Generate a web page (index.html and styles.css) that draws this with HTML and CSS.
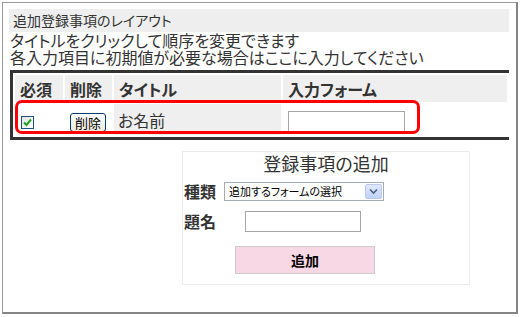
FILE: index.html
```html
<!DOCTYPE html>
<html lang="ja">
<head>
    <meta charset="UTF-8">
    <link rel="stylesheet" href="styles.css">
    <title>追加登録事項のレイアウト</title>
</head>
<body>

<div class="frame">

    <div class="layout-title">追加登録事項のレイアウト</div>
    <p class="note">タイトルをクリックして順序を変更できます</p>
    <p class="note">各入力項目に初期値が必要な場合はここに入力してください</p>

    <!--the red box marks the row that was just added-->
    <div class="table-wrap">
        <table class="items">
            <tr>
                <th class="col-req">必須</th>
                <th class="col-del">削除</th>
                <th class="col-title">タイトル</th>
                <th>入力フォーム</th>
            </tr>
            <tr>
                <td><span class="check"><svg width="9" height="9" viewBox="0 0 9 9"><path d="M1 4.5 L3.5 7 L8 1.5" fill="none" stroke="#21a121" stroke-width="2"/></svg></span></td>
                <td><button class="del-btn">削除</button></td>
                <td class="name-cell">お名前</td>
                <td><input class="text-box" type="text"></td>
            </tr>
        </table>
        <div class="highlight"></div>
    </div>

    <div class="add-box">
        <div class="add-title">登録事項の追加</div>
        <div class="add-row">
            <span class="add-label">種類</span>
            <div class="select">
                <span class="select-text">追加するフォームの選択</span>
                <span class="select-arrow"><svg width="9" height="7" viewBox="0 0 9 7"><path d="M1 1.5 L4.5 5 L8 1.5" fill="none" stroke="#4d6185" stroke-width="1.6"/></svg></span>
            </div>
        </div>
        <div class="add-row">
            <span class="add-label">題名</span>
            <input class="text-box name-input" type="text">
        </div>
        <button class="add-btn">追加</button>
    </div>

</div>

</body>
</html>
```

FILE: styles.css
```css
body{
    margin: 0;
    font-family: "Noto Sans CJK JP", "DejaVu Sans", sans-serif;
    font-feature-settings: "palt";
    color: #333;
    background: #fff;
}
.frame{
    box-sizing: border-box;
    margin: 2px;
    width: 516px;
    height: 312px;
    border: 1px solid #9a9a9a;
    border-right: 2px solid #858585;
    border-bottom: 2px solid #858585;
    padding: 6px;
}
.layout-title{
    background-color: #eee;
    font-size: 14px;
    line-height: 23px;
    height: 23px;
    padding-left: 4px;
    width: 496px;
}
.note{
    margin: 0 0 0 1px;
    font-size: 16px;
    line-height: 17px;
    height: 17px;
}
.table-wrap{
    position: relative;
    box-sizing: border-box;
    margin: 4px 0 0 1px;
    width: 499px;
    border-top: 3px solid #333;
    border-left: 3px solid #333;
    border-bottom: 3px solid #333;
}
.items{
    border-collapse: separate;
    border-spacing: 2px;
    width: 496px;
    table-layout: fixed;
}
.items th{
    background-color: #efefef;
    text-align: left;
    font-size: 16px;
    height: 27px;
    padding: 0 0 0 5px;
}
.col-req{ width: 43px; }
.col-del{ width: 42px; }
.col-title{ width: 162px; }
.items td{
    height: 31px;
    padding: 0 0 0 5px;
    font-size: 16px;
}
.items .name-cell{
    background-color: #efefef;
    padding-left: 4px;
}
.check{
    display: inline-flex;
    align-items: center;
    justify-content: center;
    box-sizing: border-box;
    width: 13px;
    height: 13px;
    border: 1px solid #1c5180;
    background: linear-gradient(135deg, #e4e4df, #fff);
    vertical-align: middle;
    margin-left: 1px;
}
.del-btn{
    font-family: inherit;
    font-size: 13px;
    line-height: 15px;
    height: 19px;
    padding: 0 4px;
    border: 1px solid #003c74;
    border-radius: 3px;
    background: linear-gradient(#fff, #ece9d8);
    color: #000;
    vertical-align: middle;
}
.text-box{
    box-sizing: border-box;
    width: 117px;
    height: 21px;
    border: 1px solid #a5a5a5;
    padding: 0;
    vertical-align: middle;
}
.highlight{
    position: absolute;
    left: 2px;
    top: 27px;
    width: 405px;
    height: 34px;
    box-sizing: border-box;
    border: 3px solid #f00;
    border-radius: 7px;
}
.add-box{
    box-sizing: border-box;
    margin: 11px 0 0 173px;
    width: 288px;
    height: 134px;
    border: 1px solid #ececec;
    padding: 0 1px;
}
.add-title{
    text-align: center;
    font-size: 18px;
    line-height: 23px;
    margin-bottom: 5px;
}
.add-row{
    display: flex;
    align-items: center;
    height: 22px;
    margin-bottom: 8px;
}
.add-label{
    font-weight: bold;
    font-size: 16px;
    width: 40px;
}
.select{
    box-sizing: border-box;
    display: flex;
    align-items: center;
    justify-content: space-between;
    width: 160px;
    height: 19px;
    border: 1px solid #a5acb2;
    padding: 0 1px 0 4px;
}
.select-text{
    font-size: 11px;
    color: #000;
}
.select-arrow{
    box-sizing: border-box;
    display: flex;
    align-items: center;
    justify-content: center;
    width: 17px;
    height: 15px;
    border: 1px solid #b9c9ef;
    border-radius: 2px;
    background: linear-gradient(#e1e9fd, #c0d2f9);
}
.name-input{
    margin-left: 21px;
    width: 116px;
}
.add-btn{
    display: block;
    margin: 14px 0 0 51px;
    width: 140px;
    height: 28px;
    border: 1px solid #ccc;
    background-color: #f7d8e4;
    font-family: inherit;
    font-weight: bold;
    font-size: 14px;
    color: #000;
}
```
